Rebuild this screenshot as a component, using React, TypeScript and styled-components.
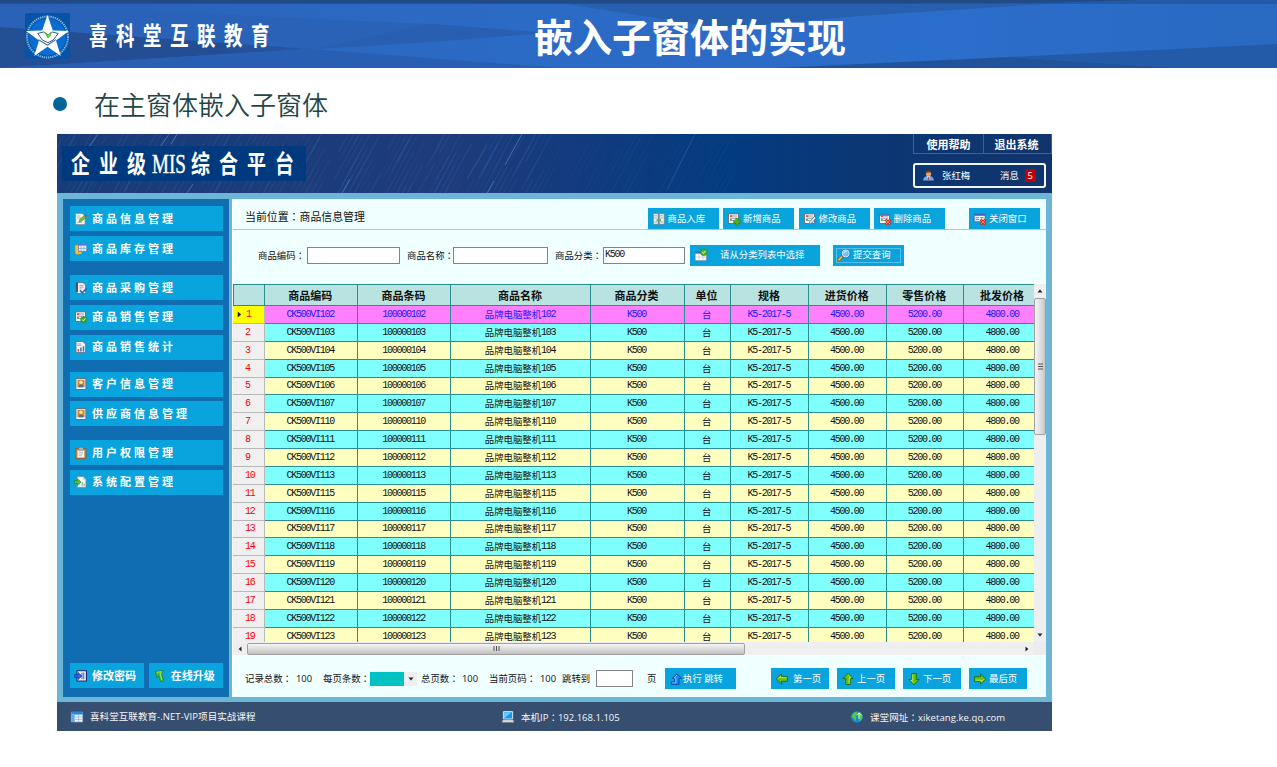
import React from 'react';
import styled, { createGlobalStyle } from 'styled-components';

const GlobalStyle = createGlobalStyle`
  *, *::before, *::after { box-sizing: border-box; }
  body { margin: 0; background: #fff; overflow: hidden; }
  #root { font-family: "Open Sans", "Noto Sans CJK SC", sans-serif; }
`;

const Page = styled.div`
  width: 1277px;
  height: 767px;
  overflow: hidden;
  background: #fff;
`;

/* ---------- slide header ---------- */

const SlideHeader = styled.header`
  position: relative;
  isolation: isolate;
  display: flex;
  align-items: center;
  height: 68px;
  padding-left: 25px;
  color: #fff;
`;

const HeaderArt = styled.svg`
  position: absolute;
  inset: 0;
  z-index: -1;
`;

const Logo = styled.svg`
  flex: none;
  margin: 4px 19px 0 0;
`;

const Brand = styled.div`
  width: 445px;
  height: 38px;
  font: 700 25px/38px "Noto Sans CJK SC", sans-serif;
`;

const BrandText = styled.span`
  display: inline-block;
  transform: scaleX(0.74);
  transform-origin: left;
  letter-spacing: 11.5px;
  white-space: nowrap;
`;

const SlideTitle = styled.h1`
  margin: 2px 0 0;
  font: 700 39px/56px "Noto Sans CJK SC", sans-serif;
`;

const BulletLine = styled.div`
  display: flex;
  align-items: center;
  height: 66px;
  padding: 6px 0 0 53px;
  font: 350 26px/38px "Noto Sans CJK SC", sans-serif;
  color: #1f4747;
`;

const Dot = styled.i`
  width: 14px;
  height: 14px;
  margin-right: 27px;
  border-radius: 50%;
  background: #069;
`;

/* ---------- application window ---------- */

const Window = styled.main`
  width: 995px;
  height: 597px;
  margin-left: 57px;
  font: 400 9.4px/14px "Open Sans", "Noto Sans CJK SC", sans-serif;
`;

const Banner = styled.div`
  position: relative;
  display: flex;
  justify-content: space-between;
  height: 59px;
  color: #fff;
  isolation: isolate;
`;

const BannerArt = styled.svg`
  position: absolute;
  inset: 0;
  z-index: -1;
`;

const Platform = styled.div`
  display: flex;
  align-items: center;
  width: 244px;
  height: 35px;
  margin: 12px 0 0 5px;
  padding: 0 0 2px 9px;
  background: #003a7e;
  font: 700 25px/33px "Noto Sans CJK SC", sans-serif;
`;

const Condensed = styled.span<{ $w: number; $scale: number; $gap?: number; $serif?: boolean }>`
  flex: none;
  width: ${(p) => p.$w}px;
  white-space: nowrap;
  & > span {
    display: inline-block;
    transform: scaleX(${(p) => p.$scale});
    transform-origin: left;
    letter-spacing: ${(p) => p.$gap ?? 0}px;
    font-family: ${(p) => (p.$serif ? '"Liberation Serif", serif' : 'inherit')};
    font-size: ${(p) => (p.$serif ? 28 : 25)}px;
    -webkit-text-stroke: ${(p) => (p.$serif ? '0.5px #fff' : '0')};
    font-weight: ${(p) => (p.$serif ? 400 : 700)};
  }
`;

const Account = styled.div`
  width: 139px;
`;

const TopMenu = styled.nav`
  display: flex;
  height: 20px;
  border: 1px solid #1273ab;
  border-width: 0 1px 1px;
`;

const TopMenuItem = styled.span`
  flex: 1;
  padding-top: 4px;
  text-align: center;
  font-size: 11px;
  font-weight: 700;
  & + & { padding-right: 2px; border-left: 1px solid #1273ab; flex: 0 0 68px; }
`;

const UserBox = styled.div`
  display: flex;
  align-items: center;
  width: 133px;
  height: 25px;
  margin-top: 9px;
  padding: 0 7px 0 8px;
  border: 2px solid #f2f6fb;
  border-radius: 3px;
`;

const UserName = styled.span`
  width: 58px;
  margin-left: 8px;
`;

const Badge = styled.b`
  width: 11px;
  height: 13px;
  margin-left: 6px;
  background: #c00000;
  font-weight: 400;
  line-height: 13px;
  text-align: center;
`;

const Frame = styled.div`
  display: flex;
  gap: 3px;
  height: 509px;
  padding: 6px 6px 5px;
  background: #6db5d5;
`;

/* ---------- sidebar ---------- */

const Sidebar = styled.aside`
  display: flex;
  flex-direction: column;
  flex: none;
  width: 166px;
  padding: 7px 6.5px 9px 7px;
  background: #106db2;
`;

const SideButton = styled.div<{ $top: number }>`
  display: flex;
  align-items: center;
  flex: none;
  gap: 5px;
  height: 25px;
  margin-top: ${(p) => p.$top}px;
  padding-left: 5px;
  background: #09a3dd;
  color: #fff;
  font-size: 11px;
  font-weight: 700;
  letter-spacing: 3px;
  white-space: nowrap;
`;

const SideFooter = styled.div`
  display: flex;
  gap: 5px;
  margin-top: auto;
`;

const SmallSideButton = styled(SideButton)`
  flex: 1;
  letter-spacing: 0;
`;

/* ---------- content panel ---------- */

const Panel = styled.section`
  display: flex;
  flex-direction: column;
  flex: none;
  width: 814px;
  border-left: 1px solid #fff;
  background: #f0ffff;
  color: #111;
`;

const Toolbar = styled.div`
  display: flex;
  align-items: flex-end;
  height: 31px;
  padding-right: 6px;
  border-bottom: 1px solid #bcc4c4;
`;

const Crumb = styled.div`
  width: 415px;
  padding: 0 0 5px 12px;
  font-size: 10.9px;
`;

const Action = styled.div<{ $w: number; $left?: number; $pad?: number; $gap?: number }>`
  position: relative;
  display: flex;
  align-items: center;
  flex: none;
  gap: ${(p) => p.$gap ?? 3}px;
  width: ${(p) => p.$w}px;
  height: 21px;
  margin-left: ${(p) => p.$left ?? 0}px;
  padding-left: ${(p) => p.$pad ?? 5}px;
  background: #09a3dd;
  color: #fff;
  white-space: nowrap;
`;

const FocusRing = styled.i`
  position: absolute;
  inset: 3px;
  border: 1px solid #53bfe6;
`;

const Filters = styled.div`
  display: flex;
  align-items: center;
  height: 54px;
  padding: 0 0 4px 25px;
`;

const Label = styled.span<{ $w: number; $left?: number }>`
  flex: none;
  width: ${(p) => p.$w}px;
  margin-left: ${(p) => p.$left ?? 0}px;
  white-space: nowrap;
`;

const CenteredColon = styled.span`
  font-family: "Noto Sans CJK TC", sans-serif;
`;

const Field = styled.span<{ $w: number }>`
  flex: none;
  width: ${(p) => p.$w}px;
  height: 17px;
  padding-left: 1px;
  border: 1px solid #808484;
  background: #fff;
  line-height: 11px;
`;

const Mono = styled.span`
  font-family: "Liberation Mono", monospace;
  font-size: 10px;
  letter-spacing: -1.25px;
`;

/* ---------- data grid ---------- */

const GridArea = styled.div`
  display: grid;
  grid-template: 358px 13px / 801px 12px;
  background: #ececee;
`;

const Grid = styled.div`
  overflow: hidden;
`;

const Row = styled.div<{ $h: number; $bg: string; $fg: string; $bold?: boolean }>`
  display: grid;
  grid-template-columns: 32px 93.2px 93.2px 139.8px 93.4px 46.6px 78px 77.6px 77.6px 78px;
  height: ${(p) => p.$h}px;
  background: ${(p) => p.$bg};
  color: ${(p) => p.$fg};
  ${(p) => p.$bold && 'font-size: 11px; font-weight: 700; border-top: 1px solid #278f8f;'}
`;

const Cell = styled.span`
  display: flex;
  align-items: center;
  justify-content: center;
  padding: 1px 1.5px 0 0;
  border: 1px solid #278f8f;
  border-width: 0 1px 1px 0;
  white-space: nowrap;
`;

const IndexCell = styled(Cell)<{ $active?: boolean }>`
  justify-content: flex-start;
  gap: 3px;
  padding-left: ${(p) => (p.$active ? 3 : 12)}px;
  border-color: #b8b8b8;
  background: ${(p) => (p.$active ? '#ff0' : '#f0f0f0')};
  color: #f00;
`;

const HeadIndex = styled(Cell)`
  border-left-width: 1px;
`;

const VScroll = styled.div`
  display: flex;
  flex-direction: column;
  align-items: center;
  background: #efeff0;
`;

const VThumb = styled.div`
  display: flex;
  align-items: center;
  justify-content: center;
  width: 12px;
  height: 137px;
  margin-bottom: auto;
  border: 1px solid #a0a0a0;
  border-radius: 2px;
  background: linear-gradient(90deg, #f5f5f5, #dcdcdc 60%, #c4c4c4);
`;

const HScroll = styled.div`
  display: flex;
  align-items: center;
  background: #efeff0;
`;

const HThumb = styled.div`
  display: flex;
  align-items: center;
  justify-content: center;
  flex: none;
  width: 498px;
  height: 12px;
  border: 1px solid #a0a0a0;
  border-radius: 2px;
  background: linear-gradient(#f5f5f5, #dcdcdc 50%, #c0c0c0);
`;

const ArrowSlot = styled.span<{ $w?: number; $h?: number; $left?: string }>`
  display: flex;
  align-items: center;
  justify-content: center;
  flex: none;
  width: ${(p) => p.$w ?? 12}px;
  height: ${(p) => p.$h ?? 12}px;
  margin-left: ${(p) => p.$left ?? 0};
`;

/* ---------- pager and status bar ---------- */

const Pager = styled.div`
  display: flex;
  align-items: center;
  flex: 1;
  padding: 5px 0 0 12px;
`;

const SizeSelect = styled.span`
  display: flex;
  justify-content: flex-end;
  width: 47px;
  height: 14px;
  margin-right: 4px;
  background: #00c2c2;
`;

const SelectArrow = styled.span`
  display: flex;
  align-items: center;
  justify-content: center;
  width: 13px;
  background: #efefef;
`;

const StatusBar = styled.footer`
  display: flex;
  align-items: center;
  height: 29px;
  padding-left: 14px;
  background: #364f70;
  color: #f4f6fa;
  font-size: 9.5px;
`;

const Status = styled.div<{ $w: number; $track?: number }>`
  display: flex;
  align-items: center;
  gap: 7px;
  width: ${(p) => p.$w}px;
  padding-top: 1px;
  letter-spacing: ${(p) => p.$track ?? 0}px;
  white-space: nowrap;
`;

/* ---------- icons ---------- */

type IconName =
  | 'edit' | 'stock' | 'purchase' | 'sale' | 'stats' | 'contact' | 'clipboard' | 'config'
  | 'password' | 'upgrade' | 'cabinet' | 'add' | 'modify' | 'remove' | 'close' | 'pick'
  | 'search' | 'jump' | 'left' | 'up' | 'down' | 'right' | 'table' | 'computer' | 'globe' | 'user';

const sheet = (
  <>
    <path d="M.5.8h10v9.7H.5z" fill="#f6f7f8" stroke="#666b73" strokeWidth=".9" />
    <path d="M2 3h7M2 5.2h7M2 7.4h4" stroke="#8b9298" strokeWidth=".9" />
    <path d="M2 2.4h2.2v1.5H2z" fill="#d84a35" />
    <path d="M2 6h1.8v1.5H2z" fill="#58a83a" />
  </>
);
const redCross = (
  <>
    <path d="M6.5 6.5l5 5M11.5 6.5l-5 5" stroke="#d8301d" strokeWidth="2.6" />
    <path d="M7 7l4 4M11 7l-4 4" stroke="#ff7a5c" strokeWidth="1" />
  </>
);
const arrow = 'M.2 6 5.5.9v2.8h6v4.6h-6v2.8z';
const greenArrow = (angle: number) => (
  <g transform={`rotate(${angle} 6 6)`}>
    <path d={arrow} fill="#63bf10" stroke="#276b12" strokeWidth=".9" />
    <path d="M2 5.8 4.8 3v1.8h5.8" fill="none" stroke="#c2f060" strokeWidth=".9" />
  </g>
);

const glyphs: Record<IconName, React.ReactNode> = {
  edit: (
    <>
      <path d="M.6.4h6.6L10 3.2v8.4H.6z" fill="#f8f8f5" stroke="#85898d" strokeWidth=".8" />
      <path d="M2.2 3h3M2.2 5h4M2.2 9.5h5" stroke="#a5aaae" strokeWidth=".8" />
      <path d="m4 9 .6-2.4 4.8-4.2 1.8 1.8-4.8 4.2z" fill="#71bd3b" stroke="#4a7b26" strokeWidth=".5" />
      <path d="m9.2 2.4 1.2-1.2L12.2 3 11 4.2z" fill="#e33b2a" />
    </>
  ),
  stock: (
    <>
      <path d="M0 2h4.5v9l-2 .8L0 10.5z" fill="#f4c04c" stroke="#b5781c" strokeWidth=".6" />
      <path d="M3.5.6h8.2v7.8H3.5z" fill="#eef4fd" stroke="#5774ad" strokeWidth=".7" />
      <path d="M3.5.6h8.2v2H3.5z" fill="#467ad1" />
      <path d="M6 2.6v5.8M8.9 2.6v5.8M4 5.4h7.4" stroke="#829bc8" strokeWidth=".7" />
      <path d="M1.6 10h5" stroke="#f0b83f" strokeWidth="2" />
    </>
  ),
  purchase: (
    <>
      <path d="M2 .6h6L10.6 3v8.6H2z" fill="#eef1f7" stroke="#526079" strokeWidth=".7" />
      <path d="M.8.5h2.2v9.5H.8z" fill="#4e5158" />
      <path d="M4.5 3.5h4M4.5 5.2h4M4.5 6.9h2" stroke="#7d8a9b" strokeWidth=".7" />
      <path d="m5 8.4 2.2 2.4 4.4-4.4" fill="none" stroke="#3568bd" strokeWidth="1.6" />
    </>
  ),
  sale: (
    <>
      {sheet}
      <circle cx="8.7" cy="8.6" r="3.1" fill="#43a82c" stroke="#247a1d" strokeWidth=".5" />
      <path d="m7.2 8.6 1.1 1.2 2-2.3" fill="none" stroke="#f0ffe6" />
    </>
  ),
  stats: (
    <>
      <path d="M1 .5h6.6L10.6 3v8.6H1z" fill="#f2f4f7" stroke="#626a75" strokeWidth=".8" />
      <path d="M2.3 3h4M2.3 4.5h4" stroke="#8d96a2" strokeWidth=".7" />
      <path d="M5.9 10.6V6.6M8.5 10.6V5.2" stroke="#3f70b4" strokeWidth="1.5" />
      <path d="M3.3 10.6V8" stroke="#d44a37" strokeWidth="1.5" />
    </>
  ),
  contact: (
    <>
      <path d="M.9.5h10v11H.9z" fill="#e6edf5" stroke="#5c6b82" strokeWidth=".9" />
      <path d="M2.5 1.8h7v7.4h-7z" fill="#d08526" />
      <circle cx="6" cy="4.3" r="1.8" fill="#ffe0ae" />
      <path d="M3.6 9.2c0-3.6 4.8-3.6 4.8 0z" fill="#3f70b3" />
      <path d="M1.6 10.3h8.6" stroke="#fff" />
    </>
  ),
  clipboard: (
    <>
      <path d="M.8 1.6h10.2v10H.8z" fill="#d5863d" stroke="#95541f" strokeWidth=".8" />
      <path d="M2.5 3.2h6.8v7.3H2.5z" fill="#f6f8fa" />
      <path d="M3.6 1.5 5 .2h2l1.3 1.3v1.8H3.6z" fill="#b5bbc1" stroke="#626a72" strokeWidth=".5" />
      <path d="M3.8 5.3h4.3M3.8 7h4.3M3.8 8.7H7" stroke="#a7adb3" strokeWidth=".7" />
    </>
  ),
  config: (
    <>
      <path d="M2.2.6h5.8l3 2.8v8.2H2.2z" fill="#f5f8f9" stroke="#7c858c" strokeWidth=".8" />
      <path d="M8 .6v2.8h3" fill="#bcd" />
      <path d="M-.5 4.6h3V2.8L6 6.1 2.5 9.4V7.5h-3z" fill="#58c331" stroke="#277b1e" strokeWidth=".6" />
      <path d="M7.2 6v4.3M9.2 7.5v2.8" stroke="#7bab9b" />
    </>
  ),
  password: (
    <>
      <path d="M2 .8h9.4v10.2H2z" fill="#f2f5fd" stroke="#1c2963" strokeWidth="1.1" />
      <path d="M8.8 2.5v6.8M7 2.5v6.8" stroke="#3a4c94" strokeWidth=".9" />
      <path d="M-.4 4.6H3V2.4l4 3.6-4 3.6V7.4H-.4z" fill="#2c62ec" stroke="#152e83" strokeWidth=".6" />
    </>
  ),
  upgrade: (
    <>
      <path d="m1.5 1.4 7.8-.8-1.6 3 2 7.2-3.2.9-1.8-6.4-2 2.6z" fill="#4bc132" stroke="#247822" strokeWidth=".7" />
      <path d="M3 2.2 7.5 1.7 6.4 4l1.4 6" fill="none" stroke="#a8f06d" strokeWidth=".8" />
    </>
  ),
  cabinet: (
    <>
      <path d="M.3.6h5v10.7h-5zM6.3.6h5v10.7h-5z" fill="#f0f0ee" stroke="#76797b" strokeWidth=".7" />
      <path d="M1.3 2.8h3M7.3 2.8h3M1.3 5h3M7.3 5h3M1.3 9h3M7.3 9h3" stroke="#a3a6a8" strokeWidth=".9" />
      <path d="M4.2 6.2v2M7.4 6.2v2" stroke="#3f9d2b" strokeWidth="1.1" />
    </>
  ),
  add: (
    <>
      {sheet}
      <path d="M7.7 5.4h2.7v2h2v2.8h-2v2H7.7v-2h-2V7.4h2z" fill="#4fb326" stroke="#287c1a" strokeWidth=".6" />
    </>
  ),
  modify: (
    <>
      {sheet}
      <path d="m5.2 11.4.8-3 4.3-5 1.8 1.6-4.3 5z" fill="#e8f1fd" stroke="#316bb5" strokeWidth=".8" />
      <path d="m5.2 11.4.6-2 1.3 1.1z" fill="#e8932f" />
    </>
  ),
  remove: (
    <>
      {sheet}
      <path d="M.5.8h10v2H.5z" fill="#4879bd" />
      {redCross}
    </>
  ),
  close: (
    <>
      <path d="M.2 1h11v7.8H.2z" fill="#f0f4fc" stroke="#3d62a4" strokeWidth=".8" />
      <path d="M.2 1h11v1.8H.2z" fill="#396cbf" />
      <path d="M1.6 4.7H5M1.6 6.7H5M6.2 4.7h3.4" stroke="#6785b5" />
      {redCross}
    </>
  ),
  pick: (
    <>
      <path d="M.2 3h11.2v8.6H.2z" fill="#fff" stroke="#6a7f9f" strokeWidth=".6" />
      <path d="M.2 2.6H6v2H.2z" fill="#2e6cc4" />
      <path d="M4 5v6.5M8 6v5.5M.5 8h10.6" stroke="#b7c1cd" strokeWidth=".7" />
      <circle cx="8.8" cy="3.2" r="3.4" fill="#49b42c" stroke="#26861e" strokeWidth=".6" />
      <path d="m7.2 3.1 1.2 1.3 2.2-2.5" fill="none" stroke="#f0ffe6" />
    </>
  ),
  search: (
    <>
      <path d="m.7 11.2 3.5-3.6" stroke="#9d5c0d" strokeWidth="2.7" strokeLinecap="round" />
      <path d="m.8 10.9 2.8-2.9" stroke="#ffc338" strokeWidth="1.5" strokeLinecap="round" />
      <circle cx="7.7" cy="4.4" r="3.7" fill="#6fc3fb" stroke="#e2f2fe" />
      <circle cx="7.7" cy="4.4" r="4.3" fill="none" stroke="#295caf" strokeWidth=".6" />
      <path d="M5.8 4.2c.2-1.6 1.5-2 2.6-1.8" fill="none" stroke="#fff" />
    </>
  ),
  jump: (
    <>
      <path d="M7 .7 11.7 5.4H9v5.9H1.2V9h3.6V5.4H2.3z" fill="#1c8aec" stroke="#0b4ba8" strokeWidth="1" />
      <path d="M7 2 4 5h1.8v4.9H2.2" fill="none" stroke="#9ad8ff" strokeWidth=".7" />
    </>
  ),
  left: greenArrow(0),
  up: greenArrow(90),
  right: greenArrow(180),
  down: greenArrow(270),
  table: (
    <>
      <path d="M.3 1h11.4v10H.3z" fill="#f3f8fd" stroke="#6ca6da" strokeWidth=".6" />
      <path d="M.3 1h11.4v2.6H.3z" fill="#2786df" />
      <path d="M.3 4h3.4v7H.3z" fill="#55aeed" />
      <path d="M4 6h7.4M4 8.4h7.4M7.6 4v7" stroke="#8fadcb" strokeWidth=".7" />
    </>
  ),
  computer: (
    <>
      <path d="M1.4.6h9.2v7.4H1.4z" fill="#1595ee" stroke="#d4e0ec" />
      <path d="M2 7.4 9.8 1.2H2z" fill="#69c5ff" />
      <path d="M.8 9h10.4l.6 2.2H.2z" fill="#ecebe6" stroke="#92979e" strokeWidth=".6" />
    </>
  ),
  globe: (
    <>
      <circle cx="6" cy="6" r="5.8" fill="#1589d8" />
      <path d="M1.8 2.5 5.5.4 6 3 4.2 4.8 5.5 6.5 4 10.4 2.8 7.2.4 6zM7 2.5 9.6 1.6l2 3.2-.5 3-2.6 2.8-.2-3.5-1.3-2z" fill="#57c83b" />
      <path d="M5.4 4.4 8 1.7l2.2 2.8M8 2v6" stroke="#e8ffb6" fill="none" strokeWidth=".9" />
    </>
  ),
  user: (
    <>
      <path d="M.2 11.4c0-3.5 2-4.9 5.8-4.9s5.8 1.4 5.8 4.9z" fill="#76a9da" />
      <path d="m4.2 6.5 1.8 4.3 1.8-4.3z" fill="#f4e6d3" />
      <path d="M6 7.4v3.6" stroke="#cf3529" />
      <circle cx="6" cy="4" r="2.9" fill="#dda471" />
      <path d="M2.8 4C2.3-.8 9.7-1 9.2 4c-1-1.8-5-1.3-6.4 0z" fill="#754018" />
    </>
  ),
};

const Glyph = styled.svg`
  flex: none;
  overflow: visible;
`;

const Icon = ({ name, size = 12 }: { name: IconName; size?: number }) => (
  <Glyph width={size} height={size} viewBox="0 0 12 12" fill="none">
    {glyphs[name]}
  </Glyph>
);

const Tri = ({ angle, w = 6 }: { angle: number; w?: number }) => (
  <Glyph width={w} height={w} viewBox="0 0 6 6">
    <path d="M.5 4.5 3 1.6l2.5 2.9z" fill="#222" transform={`rotate(${angle} 3 3)`} />
  </Glyph>
);

const Colon = () => <CenteredColon lang="zh-TW">：</CenteredColon>;

const starPoints = '22,2 27.2,17.2 43,17.6 30.3,27 35,42 22,33 9,42 13.7,27 1,17.6 16.8,17.2';

/* ---------- data ---------- */

const menu: { icon: IconName; text: string; top: number }[] = [
  { icon: 'edit', text: '商品信息管理', top: 0 },
  { icon: 'stock', text: '商品库存管理', top: 5 },
  { icon: 'purchase', text: '商品采购管理', top: 14.4 },
  { icon: 'sale', text: '商品销售管理', top: 4.6 },
  { icon: 'stats', text: '商品销售统计', top: 4.8 },
  { icon: 'contact', text: '客户信息管理', top: 12.2 },
  { icon: 'contact', text: '供应商信息管理', top: 4.4 },
  { icon: 'clipboard', text: '用户权限管理', top: 13.8 },
  { icon: 'config', text: '系统配置管理', top: 4.8 },
];

const headings = ['商品编码', '商品条码', '商品名称', '商品分类', '单位', '规格', '进货价格', '零售价格', '批发价格'];
const ids = [102, 103, 104, 105, 106, 107, 110, 111, 112, 113, 115, 116, 117, 118, 119, 120, 121, 122, 123];

const streaks = Array.from({ length: 330 }, (_, i) => {
  const x = ((i * 137.5) % 733) - 50 + (i % 5) * 3;
  const y = ((i * 29.3) % 80) - 25;
  const len = 14 + ((i * 17) % 48);
  return { x, y, len, o: (0.1 + ((i * 7) % 10) / 50) * (x > 470 ? 0.4 : 1) };
});

const App = () => (
  <Page>
    <GlobalStyle />
    <SlideHeader>
      <HeaderArt width="1277" height="68" viewBox="0 0 1277 68" preserveAspectRatio="none">
        <defs>
          <linearGradient id="sky">
            <stop offset="0" stopColor="#2860b4" />
            <stop offset=".3" stopColor="#2b69c3" />
            <stop offset=".75" stopColor="#2b6ecb" />
            <stop offset="1" stopColor="#2869c1" />
          </linearGradient>
          <linearGradient id="shade">
            <stop offset="0" stopColor="#234f94" />
            <stop offset=".7" stopColor="#234e94" />
            <stop offset="1" stopColor="#2758a5" />
          </linearGradient>
        </defs>
        <path d="M0 0h1277v68H0z" fill="url(#sky)" />
        <path d="M0 5 430 24 540 32 310 49 0 27z" fill="#2962b6" />
        <path d="M0 27 310 49 0 68z" fill="url(#shade)" />
        <path d="M0 68 310 49 560 68z" fill="#295fb2" />
        <path d="M430 24 545 33 430 42 315 49z" fill="#285fb1" />
        <path d="M560 3h500L860 16 720 28z" fill="#2860b0" />
        <path d="M775 68 1010 57 1180 68z" fill="#22539a" />
        <path d="M1010 57 1277 44v24h-97z" fill="#245ba8" />
        <path d="M0 0h1277v4H0z" fill="#2359a5" />
        <path d="M0 0h1140l-100 3-200 .5H0z" fill="#204b87" />
      </HeaderArt>
      <Logo width="45" height="46" viewBox="0 0 44 45">
        <rect width="44" height="45" rx="1.5" fill="#0753a5" />
        <circle cx="22" cy="23.5" r="18" fill="#096ed0" />
        <circle cx="22" cy="23.5" r="20" fill="none" stroke="#81b5e6" strokeWidth="2" strokeDasharray="1.3 .8" />
        <polygon points={starPoints} fill="#fff" />
        <path d="m12.5 20 6-1.5 4 3 4-3 6 1.5-5 6.5-5 2.5-5.5-2.5z" fill="#fff" stroke="#244f83" strokeWidth=".9" />
        <path d="m19 19 3 3 4-3M21 22l1.5 2 3-3" fill="none" stroke="#58b747" strokeWidth="1.2" />
        <path d="m13 26 9 5.5 8-5.5" fill="none" stroke="#315d8c" />
      </Logo>
      <Brand><BrandText>喜科堂互联教育</BrandText></Brand>
      <SlideTitle>嵌入子窗体的实现</SlideTitle>
    </SlideHeader>

    <BulletLine><Dot />在主窗体嵌入子窗体</BulletLine>

    <Window>
      <Banner>
        <BannerArt width="995" height="59" viewBox="0 0 995 59">
          <defs>
            <linearGradient id="night">
              <stop offset="0" stopColor="#183c78" />
              <stop offset=".4" stopColor="#1e3b7b" />
              <stop offset=".68" stopColor="#033b80" />
              <stop offset=".8" stopColor="#0b3775" />
              <stop offset="1" stopColor="#11346c" />
            </linearGradient>
          </defs>
          <path d="M0 0h995v59H0z" fill="url(#night)" />
          {streaks.map((s, i) => (
            <path
              key={i}
              d={`M${s.x} ${s.y + s.len}l${s.len * 0.55} ${-s.len}`}
              stroke={i % 3 ? '#3d73c4' : '#4f67a0'}
              strokeOpacity={s.o}
            />
          ))}
          <path d="m27 20 14-20M104 12l8-12M114 10l6-10M285 59l8-14M130 59l6-9M448 31l17-31M430 59l7-12" stroke="#5a91da" strokeOpacity=".6" />
          <path d="M610 56l28-56M410 45l20-34" stroke="#5a91da" strokeOpacity=".28" />
        </BannerArt>
        <Platform>
          <Condensed $w={81} $scale={0.76} $gap={11.8}><span>企业级</span></Condensed>
          <Condensed $w={39} $scale={0.68} $gap={0} $serif><span>MIS</span></Condensed>
          <Condensed $w={112} $scale={0.76} $gap={11.8}><span>综合平台</span></Condensed>
        </Platform>
        <Account>
          <TopMenu>
            <TopMenuItem>使用帮助</TopMenuItem>
            <TopMenuItem>退出系统</TopMenuItem>
          </TopMenu>
          <UserBox>
            <Icon name="user" size={11} />
            <UserName>张红梅</UserName>
            消息
            <Badge>5</Badge>
          </UserBox>
        </Account>
      </Banner>

      <Frame>
        <Sidebar>
          {menu.map((m) => (
            <SideButton key={m.text} $top={m.top}>
              <Icon name={m.icon} />
              {m.text}
            </SideButton>
          ))}
          <SideFooter>
            <SmallSideButton $top={0}><Icon name="password" />修改密码</SmallSideButton>
            <SmallSideButton $top={0}><Icon name="upgrade" />在线升级</SmallSideButton>
          </SideFooter>
        </Sidebar>

        <Panel>
          <Toolbar>
            <Crumb>当前位置<Colon />商品信息管理</Crumb>
            <Action $w={71}><Icon name="cabinet" />商品入库</Action>
            <Action $w={71} $left={4.5}><Icon name="add" />新增商品</Action>
            <Action $w={71} $left={4.5}><Icon name="modify" />修改商品</Action>
            <Action $w={71} $left={4}><Icon name="remove" />删除商品</Action>
            <Action $w={71} $left={24.5}><Icon name="close" />关闭窗口</Action>
          </Toolbar>

          <Filters>
            <Label $w={49}>商品编码<Colon /></Label>
            <Field $w={93} />
            <Label $w={46} $left={7}>商品名称<Colon /></Label>
            <Field $w={95} />
            <Label $w={48} $left={7}>商品分类<Colon /></Label>
            <Field $w={82}><Mono>K500</Mono></Field>
            <Action $w={130} $left={5} $gap={13}><Icon name="pick" />请从分类列表中选择</Action>
            <Action $w={71} $left={13}><FocusRing /><Icon name="search" />提交查询</Action>
          </Filters>

          <GridArea>
            <Grid>
              <Row $h={22} $bg="#b9e3e1" $fg="#111" $bold>
                <HeadIndex />
                {headings.map((h) => <Cell key={h}>{h}</Cell>)}
              </Row>
              {ids.map((id, i) => (
                <Row
                  key={id}
                  $h={17.89}
                  $bg={i === 0 ? '#ff80ff' : i % 2 ? '#80ffff' : '#ffffc0'}
                  $fg={i === 0 ? '#1a1aff' : '#111'}
                >
                  <IndexCell $active={i === 0}>
                    {i === 0 && <Tri angle={90} w={7} />}
                    <Mono>{i + 1}</Mono>
                  </IndexCell>
                  <Cell><Mono>CK500VI{id}</Mono></Cell>
                  <Cell><Mono>100000{id}</Mono></Cell>
                  <Cell>品牌电脑整机<Mono>{id}</Mono></Cell>
                  <Cell><Mono>K500</Mono></Cell>
                  <Cell>台</Cell>
                  <Cell><Mono>K5-2017-5</Mono></Cell>
                  <Cell><Mono>4500.00</Mono></Cell>
                  <Cell><Mono>5200.00</Mono></Cell>
                  <Cell><Mono>4800.00</Mono></Cell>
                </Row>
              ))}
            </Grid>
            <VScroll>
              <ArrowSlot $h={14}><Tri angle={0} /></ArrowSlot>
              <VThumb>
                <Glyph width="5" height="7"><path d="M0 1h5M0 3.5h5M0 6h5" stroke="#555" /></Glyph>
              </VThumb>
              <ArrowSlot $h={14}><Tri angle={180} /></ArrowSlot>
            </VScroll>
            <HScroll>
              <ArrowSlot $w={14}><Tri angle={270} /></ArrowSlot>
              <HThumb>
                <Glyph width="7" height="5"><path d="M1 0v5M3.5 0v5M6 0v5" stroke="#555" /></Glyph>
              </HThumb>
              <ArrowSlot $w={14} $left="auto"><Tri angle={90} /></ArrowSlot>
            </HScroll>
          </GridArea>

          <Pager>
            <Label $w={51}>记录总数<Colon /></Label>
            <Label $w={27}>100</Label>
            <Label $w={47}>每页条数<Colon /></Label>
            <SizeSelect>
              <SelectArrow><Tri angle={180} /></SelectArrow>
            </SizeSelect>
            <Label $w={41}>总页数<Colon /></Label>
            <Label $w={27}>100</Label>
            <Label $w={51}>当前页码<Colon /></Label>
            <Label $w={22}>100</Label>
            <Label $w={34}>跳转到</Label>
            <Field $w={37} />
            <Label $w={18} $left={14}>页</Label>
            <Action $w={71} $gap={1}><Icon name="jump" />执行 跳转</Action>
            <Action $w={58} $left={35} $gap={5}><Icon name="left" />第一页</Action>
            <Action $w={58} $left={8}><Icon name="up" />上一页</Action>
            <Action $w={58} $left={8}><Icon name="down" />下一页</Action>
            <Action $w={58} $left={8}><Icon name="right" />最后页</Action>
          </Pager>
        </Panel>
      </Frame>

      <StatusBar>
        <Status $w={431} $track={0.08}><Icon name="table" />喜科堂互联教育-.NET-VIP项目实战课程</Status>
        <Status $w={349}><Icon name="computer" /><span>本机IP<Colon />192.168.1.105</span></Status>
        <Status $w={180} $track={0.08}><Icon name="globe" /><span>课堂网址<Colon />xiketang.ke.qq.com</span></Status>
      </StatusBar>
    </Window>
  </Page>
);

export default App;
